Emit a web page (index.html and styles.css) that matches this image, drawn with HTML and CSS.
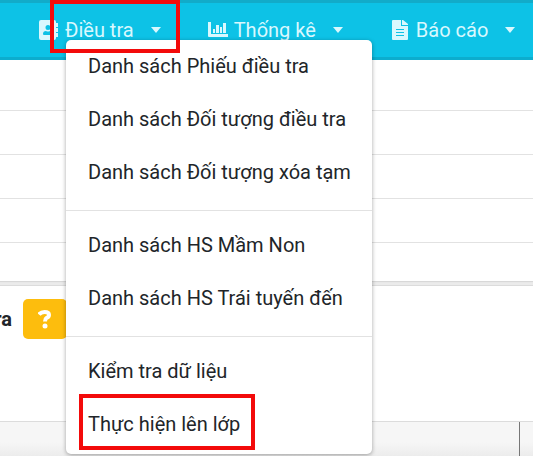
FILE: index.html
```html
<!DOCTYPE html>
<html lang="vi">
<head>
    <meta charset="UTF-8">
    <title>Điều tra</title>
    <link rel="stylesheet" href="styles.css">
</head>
<body>
    <nav class="topbar">
        <ul class="nav">
            <li class="nav-item">
                <button class="nav-link" type="button" aria-expanded="true">
                    <svg class="icon" width="20" height="20" viewBox="0 0 20 20">
                        <path fill="currentColor" fill-rule="evenodd" d="M2 0h13a2 2 0 0 1 2 2v16a2 2 0 0 1-2 2H2a2 2 0 0 1-2-2V2a2 2 0 0 1 2-2zM9 5a2.500 2.500 0 1 0 0 5 2.500 2.500 0 0 0 0-5zM7 11q-3 0-3 3 0 1 1 1h8q1 0 1-1 0-3-3-3-2 1-4 0z"/>
                        <path fill="currentColor" d="M17 3h2v4h-2zM17 8h2v4h-2zM17 13h2v4h-2z"/>
                    </svg>
                    <span>Điều tra</span>
                    <span class="caret"></span>
                </button>
                <ul class="menu">
                    <li><a class="menu-link" href="#">Danh sách Phiếu điều tra</a></li>
                    <li><a class="menu-link" href="#">Danh sách Đối tượng điều tra</a></li>
                    <li><a class="menu-link" href="#">Danh sách Đối tượng xóa tạm</a></li>
                    <li class="divider"></li>
                    <li><a class="menu-link" href="#">Danh sách HS Mầm Non</a></li>
                    <li><a class="menu-link" href="#">Danh sách HS Trái tuyến đến</a></li>
                    <li class="divider"></li>
                    <li><a class="menu-link" href="#">Kiểm tra dữ liệu</a></li>
                    <li class="marked"><a class="menu-link" href="#">Thực hiện lên lớp</a><span class="mark mark-link"></span></li>
                </ul>
                <span class="mark mark-nav"></span>
            </li>
            <li class="nav-item">
                <button class="nav-link" type="button">
                    <svg class="icon" width="20" height="20" viewBox="0 0 20 20">
                        <path fill="currentColor" d="M0 2h3v12h17v3H1a1 1 0 0 1-1-1zM5 9h2v4H5zM8 5h3v8H8zM12 7h2v6h-2zM15 3h3v10h-3z"/>
                    </svg>
                    <span>Thống kê</span>
                    <span class="caret"></span>
                </button>
            </li>
            <li class="nav-item">
                <button class="nav-link" type="button">
                    <svg class="icon" width="20" height="20" viewBox="0 0 20 20">
                        <path fill="currentColor" fill-rule="evenodd" d="M3 0h8v6h7v13a1 1 0 0 1-1 1H3a1 1 0 0 1-1-1V1a1 1 0 0 1 1-1zM6 9v1h8V9zM6 12v1h8v-1zM6 15v1h8v-1z"/>
                        <path fill="currentColor" d="M12 0h1l5 4v1h-6z"/>
                    </svg>
                    <span>Báo cáo</span>
                    <span class="caret"></span>
                </button>
            </li>
        </ul>
    </nav>

    <main>
        <section class="rows">
            <div class="row"></div>
            <div class="row"></div>
            <div class="row"></div>
            <div class="row"></div>
        </section>
        <section class="panel">
            <div class="panel-head">
                <h2 class="panel-title">ra</h2>
                <button class="help" type="button" aria-label="?">
                    <svg width="14" height="20" viewBox="0 0 14 20">
                        <path fill="none" stroke="currentColor" stroke-width="4" stroke-linejoin="round" d="M1 5.500Q3 3 6.500 3q4.500 0 4.500 3 0 2-2.500 3Q7 10 7 12.500"/>
                        <circle fill="currentColor" cx="7" cy="17" r="2.500"/>
                    </svg>
                </button>
            </div>
            <div class="grid-head">
                <div class="cell"></div>
                <div class="cell-last"></div>
            </div>
        </section>
    </main>
</body>
</html>
```
FILE: styles.css
```css
* {
    box-sizing: border-box;
}
body {
    margin: 0;
    min-height: 100vh;
    display: flex;
    flex-direction: column;
    overflow: hidden;
    background-color: #ebebeb;
    color: #212529;
    font-family: Roboto, "Noto Sans", sans-serif;
    font-size: 20px;
}
ul {
    list-style: none;
    margin: 0;
    padding: 0;
}
button {
    border: none;
    padding: 0;
    font: inherit;
    cursor: pointer;
}

/* Thanh menu */
.topbar {
    height: 60px;
    padding-left: 39px;
    background-color: #0dc2e6;
    border-top: 3px solid #12abc9;
    border-bottom: 3px solid #0cadce;
}
.nav {
    display: flex;
    gap: 47px;
    height: 100%;
}
.nav-item {
    position: relative;
    display: flex;
    align-items: center;
}
.nav-link {
    display: flex;
    align-items: center;
    gap: 6px;
    background: none;
    color: #d9f8fe;
    white-space: nowrap;
}
.caret {
    margin-left: 11px;
    border-left: 5px solid transparent;
    border-right: 5px solid transparent;
    border-top: 6px solid currentColor;
}

/* Menu con */
.menu {
    position: absolute;
    z-index: 1;
    top: 37px;
    left: 27px;
    width: 306px;
    padding-bottom: 3px;
    background-color: #fff;
    border-radius: 5px;
    box-shadow: 0 1px 4px rgba(0, 0, 0, 0.35);
}
.menu-link {
    display: block;
    padding: 0 22px;
    line-height: 53px;
    color: #212529;
    text-decoration: none;
    white-space: nowrap;
}
.divider {
    height: 1px;
    margin: 11px 0 8px;
    background-color: #e2e2e2;
}
.marked {
    position: relative;
}
.mark {
    position: absolute;
    z-index: 2;
    border: 4px solid #f30a0a;
    pointer-events: none;
}
.mark-nav {
    top: -3px;
    left: 11px;
    width: 130px;
    height: 53px;
}
.mark-link {
    top: -4px;
    left: 13px;
    width: 176px;
    height: 56px;
}

/* Nội dung */
main {
    flex: 1;
    display: flex;
    flex-direction: column;
    gap: 4px;
}
.rows {
    padding: 7px 0 38px;
    background-color: #fff;
    box-shadow: 0 1px 1px #d8d8d8;
}
.row {
    height: 44px;
    border-bottom: 1px solid #e2e2e2;
}
.panel {
    flex: 1;
    display: flex;
    flex-direction: column;
    background-color: #fff;
    border-top: 1px solid #dcdcdc;
}
.panel-head {
    display: flex;
    align-items: center;
    gap: 11px;
    padding: 13px 0 82px;
}
.panel-title {
    display: flex;
    justify-content: flex-end;
    width: 12px;
    margin: 0;
    font-size: 20px;
}
.help {
    display: flex;
    align-items: center;
    justify-content: center;
    width: 44px;
    height: 40px;
    background-color: #fdbd0d;
    color: #fff;
    border-radius: 5px;
}
.grid-head {
    flex: 1;
    display: flex;
    background: linear-gradient(#f6f6f6 60%, #ececec);
    border-top: 1px solid #dcdcdc;
}
.cell {
    flex: 1;
    border-right: 1px solid #777;
}
.cell-last {
    width: 13px;
}
```
